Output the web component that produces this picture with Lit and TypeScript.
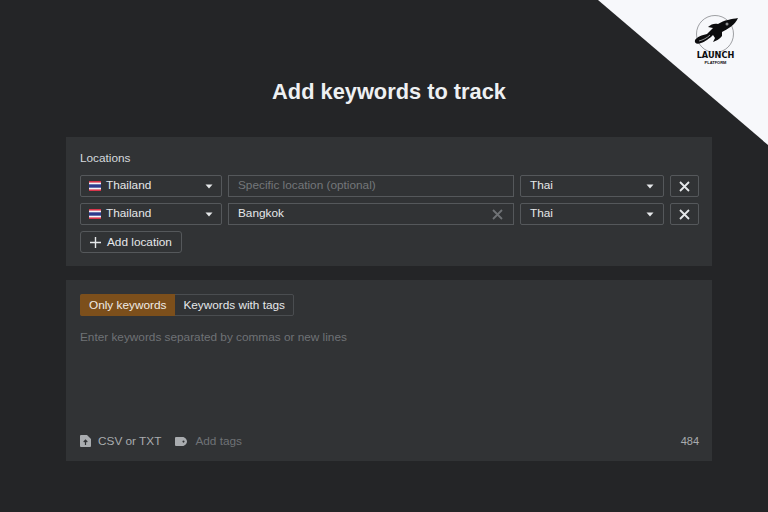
import { LitElement, html, css, svg } from 'lit';
import { customElement } from 'lit/decorators.js';

const flag = html`<svg class="flag" width="12" height="10" viewBox="0 0 12 10">
  <rect width="12" height="10" fill="#f4f5f8"/>
  <rect y="0" width="12" height="1.6" fill="#d8344a"/>
  <rect y="3.3" width="12" height="3.4" fill="#2d3a8c"/>
  <rect y="8.4" width="12" height="1.6" fill="#d8344a"/>
</svg>`;

const caret = html`<svg class="caret" width="8" height="5" viewBox="0 0 8 5"><path d="M0.5 0.5h7L4 4.5z" fill="#e6e8ea"/></svg>`;

const cross = (color: string) => html`<svg width="11" height="11" viewBox="0 0 11 11">
  <path d="M1 1l9 9M10 1l-9 9" stroke=${color} stroke-width="1.8" fill="none"/>
</svg>`;

const logo = svg`<svg width="44" height="38" viewBox="0 0 44 38">
  <circle cx="21" cy="20" r="18.500" fill="none" stroke="#77797c" stroke-width="0.7"/>
  <path d="M44 4C38 5 30 6 24 10C21 9 17 10 14 13L19 14C17 16 15 18 13 20C8 21 3 23 1 26C0 29 3 31 7 29C11 28 16 24 19 21L21 24L19 28C22 27 26 25 28 22L28 18C34 15 41 11 44 4Z" fill="#0c0c0e"/>
  <circle cx="33" cy="10" r="1.500" fill="#8c8e90"/>
  <path d="M5 27C9 26 13 24 16 21" stroke="#f7f8fb" stroke-width="0.6" fill="none"/>
</svg>`;

@customElement('app-root')
export class AppRoot extends LitElement {
  static styles = css`
    :host {
      display: block;
      position: relative;
      width: 768px;
      height: 512px;
      overflow: hidden;
      background: #242527;
      color: #e6e8ea;
      font-family: "Liberation Sans", Arial, sans-serif;
      font-size: 11.8px;
    }
    .page {
      display: flex;
      flex-direction: column;
      padding: 78px 56px 0 66px;
    }
    h1 {
      margin: 0 0 31px;
      height: 28px;
      line-height: 28px;
      text-align: center;
      font-size: 21.800px;
      font-weight: 700;
      color: #eef0f2;
    }
    .card {
      background: #313335;
      box-sizing: border-box;
    }
    .locations {
      height: 129px;
      padding: 14px 13px 0 14px;
      margin-bottom: 14px;
    }
    .label {
      height: 14px;
      line-height: 14px;
      color: #d5dade;
      margin-bottom: 10px;
    }
    .rows {
      display: flex;
      flex-direction: column;
      gap: 6px;
    }
    .row {
      display: grid;
      grid-template-columns: 142px 286px 144px 29px;
      gap: 6px;
      height: 22px;
    }
    .box {
      box-sizing: border-box;
      height: 22px;
      display: flex;
      align-items: center;
      border: 1px solid #55585b;
      border-radius: 2px;
      padding: 0 9px 0 9px;
      white-space: nowrap;
    }
    .select span, .input span { flex: 1; padding-bottom: 2px; }
    .country { padding: 0 8px; }
    .flag { margin-right: 5px; flex: none; }
    .input { border-radius: 0; padding-right: 10px; }
    .placeholder { color: #74777a; }
    .x { justify-content: center; padding: 0 1px 0 0; }
    .add {
      display: inline-flex;
      align-items: center;
      box-sizing: border-box;
      margin-top: 6px;
      height: 22px;
      width: 102px;
      border: 1px solid #55585b;
      border-radius: 3px;
      padding-left: 9px;
      gap: 6px;
    }
    .keywords {
      height: 181px;
      padding: 14px 13px 0 14px;
      display: flex;
      flex-direction: column;
    }
    .tabs {
      display: flex;
      align-self: flex-start;
      height: 22px;
      box-sizing: border-box;
      border: 1px solid #4a4d50;
      border-radius: 2px;
      line-height: 20px;
    }
    .tab { padding: 0 7.500px 0 8.500px; }
    .tab.on {
      background: #7c4f1b;
      color: #f0ece6;
      margin: -1px 0 -1px -1px;
      padding: 1px 8.500px 1px 9px;
      border-radius: 2px 0 0 2px;
    }
    .hint {
      margin-top: 14px;
      height: 14px;
      line-height: 14px;
      color: #6f7275;
      flex: 1;
    }
    .foot {
      display: flex;
      align-items: center;
      height: 14px;
      margin-bottom: 13px;
      color: #a9acaf;
    }
    .foot svg { flex: none; }
    .csv { margin-left: 7px; margin-right: 14px; }
    .tags { margin-left: 8px; color: #6f7275; }
    .count { margin-left: auto; font-size: 11px; color: #a9acaf; }
    .corner {
      position: absolute;
      top: 0;
      right: 0;
      width: 170px;
      height: 145px;
      background: #f7f8fb;
      clip-path: polygon(0 0, 100% 0, 100% 100%);
    }
    .brand {
      position: absolute;
      top: 14px;
      left: 96px;
      width: 44px;
      display: flex;
      flex-direction: column;
      align-items: center;
      color: #0c0c0e;
    }
    .brand b {
      font-size: 8.200px;
      line-height: 8px;
      margin-top: -1px;
      margin-left: -1px;
      font-weight: 700;
      font-family: "DejaVu Sans", sans-serif;
    }
    .brand i {
      font-style: normal;
      font-size: 4px;
      line-height: 7px;
      margin-left: -1px;
      font-weight: 700;
    }
  `;

  renderRow(city: string) {
    return html`<div class="row">
      <div class="box select country">${flag}<span>Thailand</span>${caret}</div>
      <div class="box input">
        ${city
          ? html`<span>${city}</span>${cross('#6f7275')}`
          : html`<span class="placeholder">Specific location (optional)</span>`}
      </div>
      <div class="box select"><span>Thai</span>${caret}</div>
      <div class="box x">${cross('#e6e8ea')}</div>
    </div>`;
  }

  render() {
    return html`
      <div class="page">
        <h1>Add keywords to track</h1>
        <section class="card locations">
          <div class="label">Locations</div>
          <div class="rows">${this.renderRow('')}${this.renderRow('Bangkok')}</div>
          <div class="add">
            <svg width="11" height="11" viewBox="0 0 11 11"><path d="M5.500 0v11M0 5.500h11" stroke="#e6e8ea" stroke-width="1.400"/></svg>
            Add location
          </div>
        </section>
        <section class="card keywords">
          <div class="tabs">
            <div class="tab on">Only keywords</div>
            <div class="tab">Keywords with tags</div>
          </div>
          <div class="hint">Enter keywords separated by commas or new lines</div>
          <div class="foot">
            <svg width="11" height="12" viewBox="0 0 11 12"><path d="M0 1a1 1 0 0 1 1-1h6l4 4v7a1 1 0 0 1-1 1H1a1 1 0 0 1-1-1z" fill="#a9acaf"/><path d="M5.500 10V5.500M3.700 7L5.500 5.200 7.300 7" stroke="#313335" stroke-width="1.200" fill="none"/></svg>
            <span class="csv">CSV or TXT</span>
            <svg width="12" height="9" viewBox="0 0 12 9"><path fill-rule="evenodd" d="M1 0h6.500C10 0 12 2.500 12 4.500S10 9 7.500 9H1a1 1 0 0 1-1-1V1a1 1 0 0 1 1-1zM8.500 3.500a1 1 0 1 0 .01 0z" fill="#a9acaf"/></svg>
            <span class="tags">Add tags</span>
            <span class="count">484</span>
          </div>
        </section>
      </div>
      <div class="corner">
        <div class="brand">${logo}<b>LAUNCH</b><i>PLATFORM</i></div>
      </div>
    `;
  }
}
